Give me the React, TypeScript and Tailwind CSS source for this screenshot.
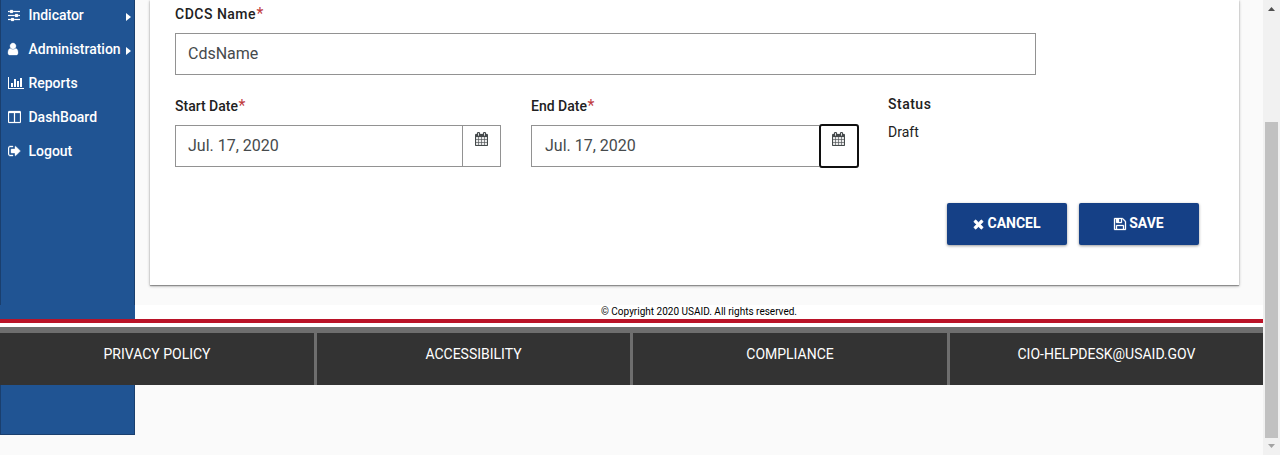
import type { ReactNode } from "react";

type IconProps = { className?: string };

function Glyph({ box, d, className }: { box: string; d: string; className?: string }) {
  return (
    <svg viewBox={box} fill="currentColor" aria-hidden="true" className={className}>
      <path d={d} />
    </svg>
  );
}

const SlidersIcon = () => (
  <Glyph
    className="h-[14px] w-[12px] stroke-current stroke-[30]"
    box="128 0 1536 1792"
    d="M480 1408v128h-352v-128h352zm352-128q26 0 45 19t19 45v256q0 26-19 45t-45 19h-256q-26 0-45-19t-19-45v-256q0-26 19-45t45-19h256zm160-384v128h-864v-128h864zm-640-512v128h-224v-128h224zm1312 1024v128h-736v-128h736zm-960-1152q26 0 45 19t19 45v256q0 26-19 45t-45 19h-256q-26 0-45-19t-19-45v-256q0-26 19-45t45-19h256zm640 512q26 0 45 19t19 45v256q0 26-19 45t-45 19h-256q-26 0-45-19t-19-45v-256q0-26 19-45t45-19h256zm320 128v128h-224v-128h224zm0-512v128h-864v-128h864z"
  />
);

const UserIcon = () => (
  <Glyph
    className="h-[14px] w-[10px] stroke-current stroke-[40] overflow-visible"
    box="256 0 1280 1792"
    d="M1536 1399q0 109-62.5 187t-150.5 78h-854q-88 0-150.5-78t-62.5-187q0-85 8.5-160.5t31.5-152 58.5-131 94-89 134.5-34.5q131 128 313 128t313-128q76 0 134.5 34.5t94 89 58.5 131 31.5 152 8.5 160.5zm-256-887q0 159-112.5 271.5t-271.5 112.5-271.5-112.5-112.5-271.5 112.5-271.5 271.5-112.5 271.5 112.5 112.5 271.5z"
  />
);

const BarChartIcon = () => (
  <Glyph
    className="h-[14px] w-[16px]"
    box="0 0 2048 1792"
    d="M640 896v512h-256v-512h256zm384-512v1024h-256v-1024h256zm1024 1152v128h-2048v-1536h128v1408h1920zm-640-896v768h-256v-768h256zm384-384v1152h-256v-1152h256z"
  />
);

const ColumnsIcon = () => (
  <Glyph
    className="h-[14px] w-[13px] stroke-current stroke-[30]"
    box="64 0 1664 1792"
    d="M224 1536h608v-1152h-640v1120q0 13 9.5 22.5t22.5 9.5zm1376-32v-1120h-640v1152h608q13 0 22.5-9.5t9.5-22.5zm128-1216v1216q0 66-47 113t-113 47h-1344q-66 0-113-47t-47-113v-1216q0-66 47-113t113-47h1344q66 0 113 47t47 113z"
  />
);

const SignOutIcon = () => (
  <Glyph
    className="h-[14px] w-[13px] stroke-current stroke-[50]"
    box="64 0 1664 1792"
    d="M704 1440q0 4 1 20t.5 26.5-3 23.5-10 19.5-20.5 6.5h-320q-119 0-203.5-84.5t-84.5-203.5v-704q0-119 84.5-203.5t203.5-84.5h320q13 0 22.5 9.5t9.5 22.5q0 4 1 20t.5 26.5-3 23.5-10 19.5-20.5 6.5h-320q-66 0-113 47t-47 113v704q0 66 47 113t113 47h312l11.5 1 11.5 3 8 5.5 7 9 2 13.5zm928-544q0 26-19 45l-544 544q-19 19-45 19t-45-19-19-45v-288h-448q-26 0-45-19t-19-45v-384q0-26 19-45t45-19h448v-288q0-26 19-45t45-19 45 19l544 544q19 19 19 45z"
  />
);

const CalendarIcon = ({ className }: IconProps) => (
  <Glyph
    className={className}
    box="64 0 1664 1792"
    d="M192 1664h288v-288h-288v288zm352 0h320v-288h-320v288zm-352-352h288v-320h-288v320zm352 0h320v-320h-320v320zm-352-384h288v-288h-288v288zm736 736h320v-288h-320v288zm-384-736h320v-288h-320v288zm768 736h288v-288h-288v288zm-384-352h320v-320h-320v320zm-352-864v-288q0-13-9.5-22.5t-22.5-9.5h-64q-13 0-22.5 9.5t-9.5 22.5v288q0 13 9.5 22.5t22.5 9.5h64q13 0 22.5-9.5t9.5-22.5zm736 864h288v-320h-288v320zm-384-384h320v-288h-320v288zm384 0h288v-288h-288v288zm32-480v-288q0-13-9.5-22.5t-22.5-9.5h-64q-13 0-22.5 9.5t-9.5 22.5v288q0 13 9.5 22.5t22.5 9.5h64q13 0 22.5-9.5t9.5-22.5zm384-64v1280q0 52-38 90t-90 38h-1408q-52 0-90-38t-38-90v-1280q0-52 38-90t90-38h128v-96q0-66 47-113t113-47h64q66 0 113 47t47 113v96h384v-96q0-66 47-113t113-47h64q66 0 113 47t47 113v96h128q52 0 90 38t38 90z"
  />
);

const TimesIcon = () => (
  <Glyph
    className="mt-[2px] h-[14px] w-[11px] stroke-current stroke-[60]"
    box="192 0 1408 1792"
    d="M1490 1322q0 40-28 68l-136 136q-28 28-68 28t-68-28l-294-294-294 294q-28 28-68 28t-68-28l-136-136q-28-28-28-68t28-68l294-294-294-294q-28-28-28-68t28-68l136-136q28-28 68-28t68 28l294 294 294-294q28-28 68-28t68 28l136 136q28 28 28 68t-28 68l-294 294 294 294q28 28 28 68z"
  />
);

const SaveIcon = () => (
  <Glyph
    className="mt-[2px] h-[14px] w-[12px] stroke-current stroke-[40] overflow-visible"
    box="128 0 1536 1792"
    d="M512 1536h768v-384h-768v384zm896 0h128v-896q0-14-10-38.5t-20-34.5l-281-281q-10-10-34-20t-39-10v416q0 40-28 68t-68 28h-576q-40 0-68-28t-28-68v-416h-128v1280h128v-416q0-40 28-68t68-28h832q40 0 68 28t28 68v416zm-384-928v-320q0-13-9.5-22.5t-22.5-9.5h-192q-13 0-22.5 9.5t-9.5 22.5v320q0 13 9.5 22.5t22.5 9.5h192q13 0 22.5-9.5t9.5-22.5zm640 32v928q0 40-28 68t-68 28h-1344q-40 0-68-28t-28-68v-1344q0-40 28-68t68-28h928q40 0 88 20t76 48l280 280q28 28 48 76t20 88z"
  />
);

const navItems = [
  { label: "Indicator", icon: <SlidersIcon />, expandable: true },
  { label: "Administration", icon: <UserIcon />, expandable: true },
  { label: "Reports", icon: <BarChartIcon />, expandable: false },
  { label: "DashBoard", icon: <ColumnsIcon />, expandable: false },
  { label: "Logout", icon: <SignOutIcon />, expandable: false },
];

const footerLinks = ["PRIVACY POLICY", "ACCESSIBILITY", "COMPLIANCE", "CIO-HELPDESK@USAID.GOV"];

function Sidebar() {
  return (
    <nav className="col-start-1 row-span-3 row-start-1 border-x border-b border-[#1a3f6e] bg-[#205493] text-white">
      <ul>
        {navItems.map((item) => (
          <li key={item.label} className="flex h-[34px] items-center pr-[3px] pb-1 pl-[7px] text-sm">
            <span className="w-[20.5px] pb-px">{item.icon}</span>
            <a className="flex-1 whitespace-nowrap font-medium tracking-[-0.02px]">{item.label}</a>
            {item.expandable && (
              <svg viewBox="0 0 5 8" fill="currentColor" className="mt-[3px] h-[8px] w-[5px] shrink-0">
                <path d="M0 0L5 4L0 8Z" />
              </svg>
            )}
          </li>
        ))}
      </ul>
    </nav>
  );
}

function Label({ children, className = "" }: { children: ReactNode; className?: string }) {
  return (
    <div className={`flex h-5 items-center text-sm leading-5 font-medium text-[#212121] ${className}`}>
      {children}
      <span className="ml-[0.5px] text-base leading-5 font-normal tracking-normal text-[#c03a40]">*</span>
    </div>
  );
}

function DateField({ label, value, focused = false }: { label: string; value: string; focused?: boolean }) {
  return (
    <div>
      <Label>{label}</Label>
      <div className="mt-[9px] flex h-[42px] w-[326px]">
        <div
          className={
            focused
              ? "flex w-[288px] items-center border border-r-0 border-[#929292] pl-[13px] text-base text-[#464a4c]"
              : "flex w-[287px] items-center border border-r-0 border-[#929292] pl-3 text-base text-[#464a4c]"
          }
        >
          {value}
        </div>
        <button
          className={
            focused
              ? "-my-px -mr-[2px] flex flex-1 justify-center rounded-[3px] border-2 border-[#101010] pt-[6px] pr-px text-[#464a4c]"
              : "flex flex-1 justify-center border border-[#929292] pt-[6px] text-[#464a4c]"
          }
        >
          <CalendarIcon className="h-[14px] w-[13px] stroke-current stroke-[25]" />
        </button>
      </div>
    </div>
  );
}

function ActionButton({ icon, children }: { icon: ReactNode; children: ReactNode }) {
  return (
    <button className="flex h-[42px] w-[120px] items-center justify-center gap-[3px] rounded-[2px] bg-[#154086] pb-[2px] text-sm font-bold text-white shadow-[0_1px_3px_rgba(0,0,0,0.4)]">
      {icon}
      <span>{children}</span>
    </button>
  );
}

function FormCard() {
  return (
    <main className="col-start-2 row-start-1 pr-6 pb-5 pl-[15px]">
      <section className="h-full bg-white pt-1 pl-[25px] shadow-[0_1px_3px_rgba(0,0,0,0.3),0_1px_1px_rgba(0,0,0,0.3)]">
        <Label className="tracking-[0.5px]">CDCS Name</Label>
        <div className="mt-[9px] flex h-[42px] w-[861px] items-center border border-[#929292] pl-3 text-base text-[#464a4c]">
          CdsName
        </div>
        <div className="mt-[21px] flex">
          <DateField label="Start Date" value="Jul. 17, 2020" />
          <div className="ml-[30px]">
            <DateField label="End Date" value="Jul. 17, 2020" focused />
          </div>
          <div className="-mt-[2px] ml-[31px] text-sm leading-5 text-[#212121]">
            <div className="font-medium tracking-[0.5px]">Status</div>
            <div className="mt-2">Draft</div>
          </div>
        </div>
        <div className="mt-9 mr-10 flex justify-end gap-3">
          <ActionButton icon={<TimesIcon />}>CANCEL</ActionButton>
          <ActionButton icon={<SaveIcon />}>SAVE</ActionButton>
        </div>
      </section>
    </main>
  );
}

function Footer() {
  return (
    <footer className="z-10 col-span-2 col-start-1 row-start-2 flex flex-col">
      <div className="flex h-[14px]">
        <div className="w-[135px] bg-[#205493]" />
        <div className="flex-1 bg-white text-center text-[10px] leading-[14px] text-black">
          © Copyright 2020 USAID. All rights reserved.
        </div>
      </div>
      <div className="h-[4px] bg-[#ba1328]" />
      <div className="h-[4px] bg-white" />
      <div className="h-[6px] bg-[#6e6e6e]" />
      <div className="grid flex-1 grid-cols-[317px_316px_317px_1fr] bg-[#333]">
        {footerLinks.map((link) => (
          <a
            key={link}
            className="border-r-[3px] border-[#6e6e6e] pt-[11px] text-center text-sm leading-5 text-white last:border-r-0"
          >
            {link}
          </a>
        ))}
      </div>
    </footer>
  );
}

function ScrollTrack() {
  return (
    <div className="flex w-[17px] flex-col items-center bg-[#f1f1f1]">
      <svg viewBox="0 0 7 4" className="mt-[7px] h-[4px] w-[7px]" fill="#505050">
        <path d="M0 4L3.5 0L7 4Z" />
      </svg>
      <div className="mt-[111px] h-[316px] w-[13px] bg-[#c1c1c1]" />
      <svg viewBox="0 0 7 4" className="mt-[6px] h-[4px] w-[7px]" fill="#a3a3a3">
        <path d="M0 0L3.5 4L7 0Z" />
      </svg>
    </div>
  );
}

export default function App() {
  return (
    <div className="flex h-[455px] w-[1280px] overflow-hidden bg-[#fafafa] font-['Roboto',sans-serif]">
      <div className="grid flex-1 grid-cols-[135px_1fr] grid-rows-[305px_80px_50px_20px]">
        <Sidebar />
        <FormCard />
        <Footer />
      </div>
      <ScrollTrack />
    </div>
  );
}
